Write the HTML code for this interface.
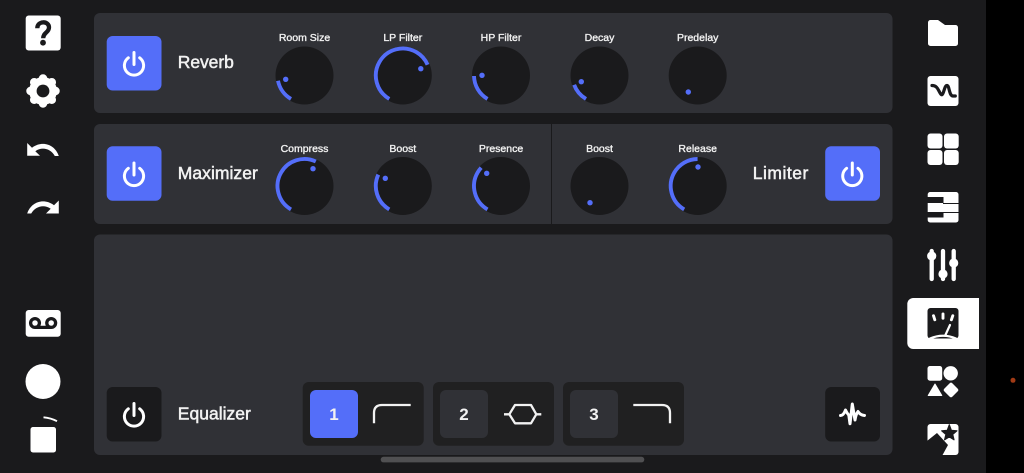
<!DOCTYPE html>
<html><head><meta charset="utf-8"><style>
html,body{margin:0;padding:0;background:#000;width:1024px;height:473px;overflow:hidden}
svg{display:block}
text{font-family:"Liberation Sans",sans-serif;fill:#f2f2f2}
.l{font-size:10.5px;text-anchor:middle;stroke:#f2f2f2;stroke-width:.35px}
.t{font-size:17.5px;stroke:#f2f2f2;stroke-width:.5px}
.n{font-size:17px;font-weight:bold;text-anchor:middle}
.a{fill:none;stroke:#546ef9;stroke-width:3.9}
.d{fill:#546ef9}
.k{fill:#1a1a1c}
</style></head><body>
<svg width="1024" height="473" viewBox="0 0 1024 473" xmlns="http://www.w3.org/2000/svg">
<rect width="1024" height="473" fill="#000"/>
<rect width="986" height="473" fill="#1a1a1c"/>
<rect x="94" y="13" width="798.5" height="100" rx="6" fill="#303136"/>
<rect x="94" y="124" width="798.5" height="100" rx="6" fill="#303136"/>
<rect x="94" y="234.5" width="798.5" height="220.5" rx="6" fill="#303136"/>
<rect x="551" y="124" width="1" height="100" fill="#1a1a1c"/>
<rect x="380.7" y="456.8" width="263.6" height="5.6" rx="2.8" fill="#505052"/>

<!-- buttons -->
<rect x="106.7" y="36" width="54.8" height="54.5" rx="6" fill="#546ef9"/>
<rect x="106.7" y="146.3" width="54.8" height="54.5" rx="6" fill="#546ef9"/>
<rect x="825.2" y="146.3" width="54.8" height="54.5" rx="6" fill="#546ef9"/>
<rect x="106.7" y="387" width="54.8" height="54.5" rx="6" fill="#1a1a1c"/>
<rect x="825.2" y="387" width="54.8" height="54.5" rx="6" fill="#1a1a1c"/>
<g fill="none" stroke="#fff" stroke-width="3" stroke-linecap="round">
<path d="M134 52.5V64.5M128.3 57.8A9.6 9.6 0 1 0 139.7 57.8"/>
<path d="M134 163V175M128.3 168.3A9.6 9.6 0 1 0 139.7 168.3"/>
<path d="M852.3 163V175M846.6 168.3A9.6 9.6 0 1 0 858 168.3"/>
<path d="M134 403.5V415.5M128.3 408.8A9.6 9.6 0 1 0 139.7 408.8"/>
</g>
<path d="M840.5 415.5Q843.5 415.5 845.5 410Q847.5 414 848.8 415L850 423.8L852.3 404L855 420Q856 414 858 411.5Q860 415 864.5 415.5" fill="none" stroke="#fff" stroke-width="3" stroke-linecap="round" stroke-linejoin="round"/>

<!-- titles -->
<text class="t" x="177.8" y="68" textLength="56">Reverb</text>
<text class="t" x="177.8" y="179" textLength="80">Maximizer</text>
<text class="t" x="752.7" y="179" textLength="55.6">Limiter</text>
<text class="t" x="177.8" y="419.5" textLength="73">Equalizer</text>

<!-- labels -->
<text class="l" x="304.5" y="41">Room Size</text>
<text class="l" x="402.8" y="41">LP Filter</text>
<text class="l" x="501" y="41">HP Filter</text>
<text class="l" x="599.5" y="41">Decay</text>
<text class="l" x="697.7" y="41">Predelay</text>
<text class="l" x="304.5" y="152">Compress</text>
<text class="l" x="402.8" y="152">Boost</text>
<text class="l" x="501" y="152">Presence</text>
<text class="l" x="599.5" y="152">Boost</text>
<text class="l" x="697.7" y="152">Release</text>

<!-- knobs -->
<circle class="k" cx="304.5" cy="75.5" r="29"/><circle class="k" cx="402.8" cy="75.5" r="29"/><circle class="k" cx="501" cy="75.5" r="29"/><circle class="k" cx="599.5" cy="75.5" r="29"/><circle class="k" cx="697.7" cy="75.5" r="29"/>
<circle class="k" cx="304.5" cy="186" r="29"/><circle class="k" cx="402.8" cy="186" r="29"/><circle class="k" cx="501" cy="186" r="29"/><circle class="k" cx="599.5" cy="186" r="29"/><circle class="k" cx="697.7" cy="186" r="29"/>
<circle class="a" cx="304.5" cy="75.5" r="27" pathLength="360" stroke-dasharray="49 360" transform="rotate(120 304.5 75.5)"/>
<circle class="a" cx="402.8" cy="75.5" r="27" pathLength="360" stroke-dasharray="217 360" transform="rotate(120 402.8 75.5)"/>
<circle class="a" cx="501" cy="75.5" r="27" pathLength="360" stroke-dasharray="59 360" transform="rotate(120 501 75.5)"/>
<circle class="a" cx="599.5" cy="75.5" r="27" pathLength="360" stroke-dasharray="40 360" transform="rotate(120 599.5 75.5)"/>
<circle class="a" cx="304.5" cy="186" r="27" pathLength="360" stroke-dasharray="175 360" transform="rotate(120 304.5 186)"/>
<circle class="a" cx="402.8" cy="186" r="27" pathLength="360" stroke-dasharray="85 360" transform="rotate(120 402.8 186)"/>
<circle class="a" cx="501" cy="186" r="27" pathLength="360" stroke-dasharray="103 360" transform="rotate(120 501 186)"/>
<circle class="a" cx="697.7" cy="186" r="27" pathLength="360" stroke-dasharray="150 360" transform="rotate(120 697.7 186)"/>
<circle class="d" cx="285.7" cy="79.3" r="2.7"/><circle class="d" cx="420.8" cy="68.7" r="2.7"/><circle class="d" cx="482" cy="75.3" r="2.7"/><circle class="d" cx="581.3" cy="81.7" r="2.7"/><circle class="d" cx="688.3" cy="92" r="2.7"/>
<circle class="d" cx="313" cy="168.7" r="2.7"/><circle class="d" cx="385.3" cy="178.3" r="2.7"/><circle class="d" cx="486.7" cy="173.3" r="2.7"/><circle class="d" cx="590" cy="202.7" r="2.7"/><circle class="d" cx="698" cy="167" r="2.7"/>

<!-- EQ groups -->
<rect x="302.7" y="382" width="121" height="63.7" rx="6" fill="#202021"/>
<rect x="433" y="382" width="121" height="63.7" rx="6" fill="#202021"/>
<rect x="563" y="382" width="121" height="63.7" rx="6" fill="#202021"/>
<rect x="310" y="390" width="48" height="48" rx="6" fill="#546ef9"/>
<rect x="440" y="390" width="48" height="48" rx="6" fill="#303136"/>
<rect x="570" y="390" width="48" height="48" rx="6" fill="#303136"/>
<text class="n" x="334" y="420">1</text><text class="n" x="464" y="420">2</text><text class="n" x="594" y="420">3</text>
<g fill="none" stroke="#f2f2f2" stroke-width="2.3" stroke-linejoin="round">
<path d="M374 423.3V413Q374 405 382 405H410.7"/>
<path d="M504 414.3H509.3L515 405H531L536.3 414.3H541.3M509.3 414.3L515 423.3H531L536.3 414.3"/>
<path d="M633.3 405H662Q670 405 670 413V423.3"/>
</g>

<!-- left column -->
<rect x="25.7" y="15.5" width="35" height="35" rx="3" fill="#fff"/>
<path d="M37.3 28.2C37.3 20.5 49 20.5 49 27.5C49 32.5 43.2 32.5 43.2 38.3" fill="none" stroke="#1a1a1c" stroke-width="4.3"/>
<circle cx="43" cy="42.7" r="2.9" fill="#1a1a1c"/>

<g fill="#fff">
<circle cx="43" cy="91" r="14"/>
<g stroke="#fff" stroke-width="8.5" stroke-linecap="round">
<path d="M43 78.5V103.5M30.5 91H55.5M34.2 82.2L51.8 99.8M34.2 99.8L51.8 82.2"/>
</g>
<circle cx="43" cy="91" r="6.4" fill="#1a1a1c"/>
<path d="M27.2 143V155.8H40L35.3 151.2C42 146.5 50.5 148.5 54.8 156H58.8C55 144.5 42.5 140 32 147.7Z"/>
<path d="M58.8 200.5V213.5H46L50.7 208.8C44 204 35.5 206.2 31.2 213.5H27.2C31 202 43.5 197.5 54 205.2Z"/>
<rect x="25.7" y="310" width="35" height="26.7" rx="3"/>
<circle cx="43" cy="381.5" r="17.5"/>
<rect x="30.5" y="427" width="25.5" height="25.5" rx="2.5"/>
</g>
<path d="M43.5 417.3Q51 418 57 421.2" fill="none" stroke="#fff" stroke-width="1.8"/>
<g fill="none" stroke="#1a1a1c" stroke-width="3.3">
<circle cx="35" cy="323" r="4.4"/><circle cx="51.2" cy="323" r="4.4"/><path d="M35 327.4H51.2"/>
</g>

<!-- right column -->
<rect x="907.3" y="298" width="71.7" height="51" rx="6" fill="#fff"/>
<rect x="970" y="298" width="9" height="51" fill="#fff"/>
<g fill="#fff">
<path d="M930.5 20H938L945 25H955.5A2.5 2.5 0 0 1 958 27.5V43.5A2.5 2.5 0 0 1 955.5 46H930.5A2.5 2.5 0 0 1 928 43.5V22.5A2.5 2.5 0 0 1 930.5 20Z"/>
<rect x="927.5" y="76" width="31" height="30" rx="3"/>
<rect x="927.5" y="133.5" width="15" height="15" rx="3"/><rect x="944" y="133.5" width="14.7" height="15" rx="3"/>
<rect x="927.5" y="150" width="15" height="15" rx="3"/><rect x="944" y="150" width="14.7" height="15" rx="3"/>
<rect x="927.7" y="192" width="30.8" height="30.5" rx="2.5"/>
<rect x="927.5" y="366" width="14.7" height="14.7" rx="2.5"/>
<circle cx="950.7" cy="373.3" r="7.2"/>
<path d="M935 384L941.8 395.5H928.2Z" stroke="#fff" stroke-linejoin="round"/>
<rect x="945.3" y="384.3" width="11.4" height="11.4" rx="2" transform="rotate(45 951 390)"/>
<rect x="927.5" y="424" width="31" height="31" rx="3"/>
</g>
<path d="M932 85.5C936 85.5 937.5 88 939 91C941 95 942 96.5 943.5 92C945 87.5 945.5 85.5 947 85.5C949.5 85.5 949 96 953 96H955.3" fill="none" stroke="#1a1a1c" stroke-width="3.2" stroke-linecap="round"/>
<g fill="#1a1a1c">
<rect x="927" y="197" width="16.5" height="6"/><rect x="927" y="212" width="16.5" height="5.5"/>
<rect x="943" y="203" width="16" height="1"/><rect x="943" y="212" width="16" height="1"/>
<rect x="927.5" y="308" width="31" height="30.5" rx="3"/>
<path d="M927 441L937 433L948 445L942 456H926Z"/>
<path d="M949.3 424.8L951.4 430.4L956.9 430.8L952.7 434.4L954 439.8L949.3 436.9L944.6 439.8L945.9 434.4L941.7 430.8L947.2 430.4Z" stroke="#1a1a1c" stroke-width="1.2" stroke-linejoin="round"/>
</g>
<g fill="none" stroke="#fff" stroke-linecap="round">
<path d="M931.7 251V279M943 251V279M953.7 251V279" stroke-width="4.3"/>
<path d="M933.5 315.7L934.8 319.8M943 313.9V318.2M952.8 315.7L951.4 319.8" stroke-width="2.9"/>
<path d="M945.2 335.5L950 325" stroke-width="2.2"/>
<path d="M930 338.5Q943 333 956 338.5" stroke-width="2.2"/>
</g>
<g fill="#fff"><circle cx="931.7" cy="256" r="4.6"/><circle cx="943" cy="274" r="4.6"/><circle cx="953.7" cy="263" r="4.6"/></g>

<circle cx="1013" cy="380.3" r="2.5" fill="#a03a15"/>
</svg>
</body></html>
